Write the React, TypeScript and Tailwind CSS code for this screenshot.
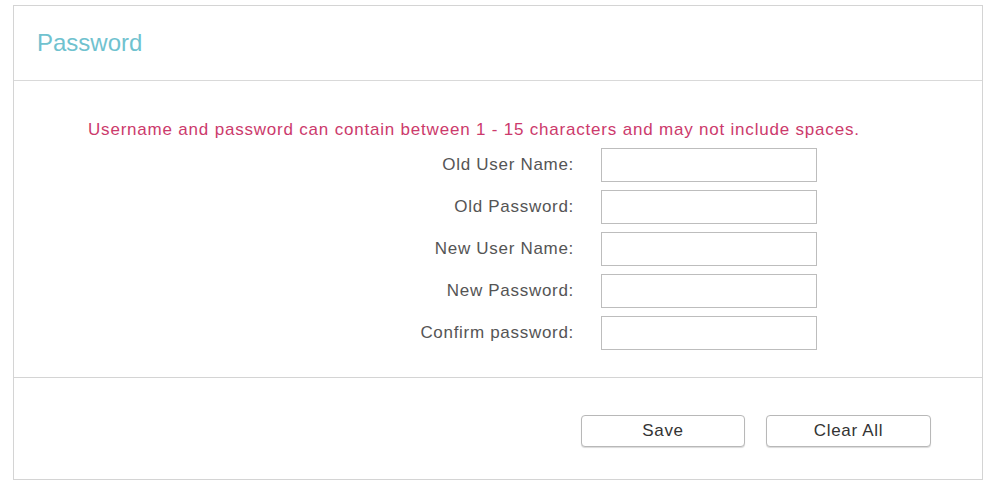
import React from "react";

const rows = ["Old User Name:", "Old Password:", "New User Name:", "New Password:", "Confirm password:"];

export default function App() {
  return (
    <div className="w-[990px] h-[487px] bg-white pt-[5px] pl-[13px]" style={{ fontFamily: '"Liberation Sans", Arial, sans-serif' }}>
      <div className="w-[970px] h-[475px] border border-[#d4d4d4] flex flex-col">
        <div className="h-[75px] border-b border-[#d9d9d9] flex items-center pl-[23px] shrink-0">
          <span className="text-[24px] text-[#70c2cf] leading-none">Password</span>
        </div>
        <div className="h-[297px] border-b border-[#d4d4d4] pt-[39px] shrink-0">
          <div className="pl-[74px] text-[17px] tracking-[0.8px] leading-[20px] text-[#cc3a6c]">
            Username and password can contain between 1 - 15 characters and may not include spaces.
          </div>
          <div className="mt-[8px] flex flex-col gap-[8px]">
            {rows.map((r) => (
              <div key={r} className="flex items-center h-[34px]">
                <div className="w-[560px] text-right text-[17px] tracking-[0.7px] text-[#555555] leading-[20px]">{r}</div>
                <input className="ml-[27px] w-[216px] h-[34px] border border-[#bdbdbd] bg-white outline-none" />
              </div>
            ))}
          </div>
        </div>
        <div className="flex justify-end pt-[37px] pr-[51px] gap-[21px]">
          <button className="w-[164px] h-[32px] rounded-[4px] border border-[#b8b8b8] bg-white text-[17px] tracking-[0.7px] text-[#333333] shadow-[0_1px_1px_rgba(0,0,0,0.15)]">Save</button>
          <button className="w-[165px] h-[32px] rounded-[4px] border border-[#b8b8b8] bg-white text-[17px] tracking-[0.7px] text-[#333333] shadow-[0_1px_1px_rgba(0,0,0,0.15)]">Clear All</button>
        </div>
      </div>
    </div>
  );
}
